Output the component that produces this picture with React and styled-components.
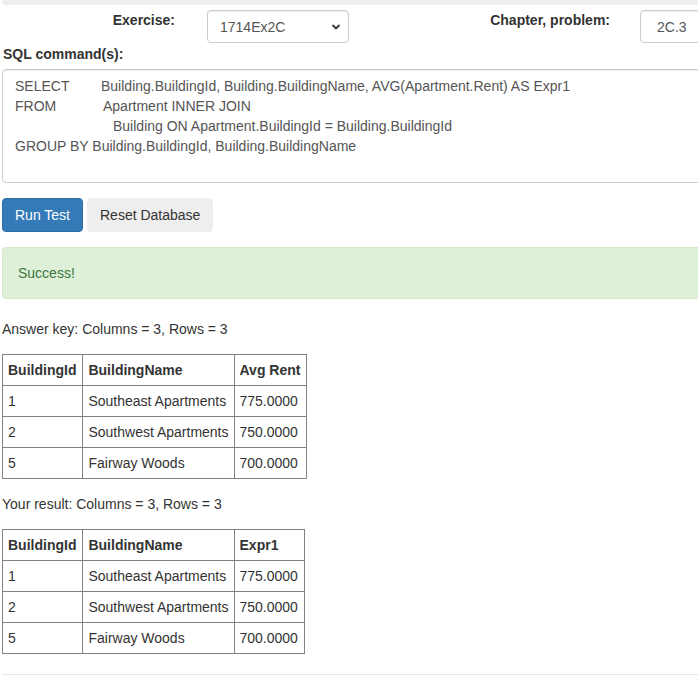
import React from 'react';
import styled, { createGlobalStyle } from 'styled-components';

const GlobalStyle = createGlobalStyle`
  html, body {
    margin: 0;
    overflow: hidden;
    background: #fff;
  }
  body {
    font-family: "Liberation Sans", Arial, Helvetica, sans-serif;
    font-size: 14px;
    line-height: 20px;
    color: #333;
  }
  * {
    box-sizing: border-box;
  }
`;

const answerKey = {
  columns: ['BuildingId', 'BuildingName', 'Avg Rent'],
  rows: [
    ['1', 'Southeast Apartments', '775.0000'],
    ['2', 'Southwest Apartments', '750.0000'],
    ['5', 'Fairway Woods', '700.0000'],
  ],
};

const yourResult = {
  columns: ['BuildingId', 'BuildingName', 'Expr1'],
  rows: answerKey.rows,
};

const ResultTable = ({ data }) => (
  <Table>
    <thead>
      <tr>
        {data.columns.map((c) => (
          <th key={c}>{c}</th>
        ))}
      </tr>
    </thead>
    <tbody>
      {data.rows.map((row, i) => (
        <tr key={i}>
          {row.map((cell, j) => (
            <td key={j}>{cell}</td>
          ))}
        </tr>
      ))}
    </tbody>
  </Table>
);

const App = () => {
  return (
    <Page>
      <GlobalStyle />
      <TopBar />
      <FormRow>
        <FieldLabel $width={188}>Exercise:</FieldLabel>
        <SelectWrap>
          <Select defaultValue='1714Ex2C'>
            <option>1714Ex2C</option>
          </Select>
          <Chevron width='10' height='8' viewBox='0 0 10 8'>
            <path d='M1.5 2 L5 5.5 L8.5 2' fill='none' stroke='#333' strokeWidth='1.8' />
          </Chevron>
        </SelectWrap>
        <FieldLabel $width={276}>Chapter, problem:</FieldLabel>
        <TextInput defaultValue='2C.3' readOnly />
      </FormRow>

      <SectionLabel>SQL command(s):</SectionLabel>
      <SqlBox>
        <SqlLine>
          <Keyword $width={86}>SELECT</Keyword>
          Building.BuildingId, Building.BuildingName, AVG(Apartment.Rent) AS Expr1
        </SqlLine>
        <SqlLine>
          <Keyword $width={88}>FROM</Keyword>
          Apartment INNER JOIN
        </SqlLine>
        <SqlLine>
          <Keyword $width={98} />
          Building ON Apartment.BuildingId = Building.BuildingId
        </SqlLine>
        <SqlLine>GROUP BY Building.BuildingId, Building.BuildingName</SqlLine>
      </SqlBox>

      <ButtonRow>
        <Button $primary>Run Test</Button>
        <Button>Reset Database</Button>
      </ButtonRow>

      <Alert>Success!</Alert>

      <Caption>Answer key: Columns = 3, Rows = 3</Caption>
      <ResultTable data={answerKey} />

      <Caption>Your result: Columns = 3, Rows = 3</Caption>
      <ResultTable data={yourResult} />

      <Rule />
    </Page>
  );
};

export default App;

const Page = styled.div`
  width: 780px;
  padding-left: 2px;
`;

const TopBar = styled.div`
  height: 5px;
  background: #eee;
  border-radius: 0 0 4px 4px;
  margin-bottom: 5px;
`;

const FormRow = styled.div`
  display: flex;
  align-items: flex-start;
  height: 34px;
`;

const FieldLabel = styled.label`
  width: ${(p) => p.$width}px;
  padding-right: 15px;
  text-align: right;
  font-weight: bold;
  line-height: 20px;
  flex-shrink: 0;
`;

const SelectWrap = styled.div`
  position: relative;
  margin-left: 17px;
  width: 142px;
  flex-shrink: 0;
`;

const Select = styled.select`
  appearance: none;
  width: 100%;
  height: 33px;
  padding: 6px 12px;
  border: 1px solid #ccc;
  border-radius: 4px;
  background: #fff;
  color: #555;
  font-family: inherit;
  font-size: 14px;
  box-shadow: inset 0 1px 1px rgba(0, 0, 0, 0.075);
  outline: none;
`;

const Chevron = styled.svg`
  position: absolute;
  right: 8px;
  top: 13px;
  pointer-events: none;
`;

const TextInput = styled.input`
  margin-left: 15px;
  width: 120px;
  height: 33px;
  padding: 6px 16px;
  border: 1px solid #ccc;
  border-radius: 4px;
  color: #555;
  font-family: inherit;
  font-size: 14px;
  box-shadow: inset 0 1px 1px rgba(0, 0, 0, 0.075);
  outline: none;
`;

const SectionLabel = styled.label`
  display: block;
  font-weight: bold;
  padding-left: 1px;
  margin-bottom: 5px;
`;

const SqlBox = styled.div`
  height: 114px;
  padding: 6px 12px;
  border: 1px solid #ccc;
  border-radius: 4px;
  color: #555;
  background: #fff;
  box-shadow: inset 0 1px 1px rgba(0, 0, 0, 0.075);
`;

const SqlLine = styled.div`
  display: flex;
  white-space: pre;
  line-height: 20px;
`;

const Keyword = styled.span`
  display: inline-block;
  width: ${(p) => p.$width}px;
  flex-shrink: 0;
`;

const ButtonRow = styled.div`
  display: flex;
  gap: 4px;
  margin-top: 15px;
`;

const Button = styled.button`
  height: 34px;
  padding: 6px 12px;
  font-family: inherit;
  font-size: 14px;
  line-height: 20px;
  border-radius: 4px;
  cursor: pointer;
  color: ${(p) => (p.$primary ? '#fff' : '#333')};
  background: ${(p) => (p.$primary ? '#337ab7' : '#eee')};
  border: 1px solid ${(p) => (p.$primary ? '#2e6da4' : '#eee')};
`;

const Alert = styled.div`
  margin-top: 15px;
  margin-bottom: 20px;
  padding: 15px;
  background: #dff0d8;
  border: 1px solid #d6e9c6;
  border-radius: 4px;
  color: #3c763d;
`;

const Caption = styled.div`
  line-height: 20px;
  margin-bottom: 15px;
`;

const Table = styled.table`
  border-collapse: collapse;
  margin-bottom: 15px;

  th,
  td {
    border: 1px solid #828282;
    padding: 5px;
    text-align: left;
    line-height: 20px;
    white-space: nowrap;
  }

  th:first-child,
  td:first-child,
  th:last-child,
  td:last-child {
    padding-right: 6px;
  }

  th {
    font-weight: bold;
  }
`;

const Rule = styled.hr`
  margin: 20px 0 0;
  border: 0;
  border-top: 1px solid #e6e6e6;
`;
